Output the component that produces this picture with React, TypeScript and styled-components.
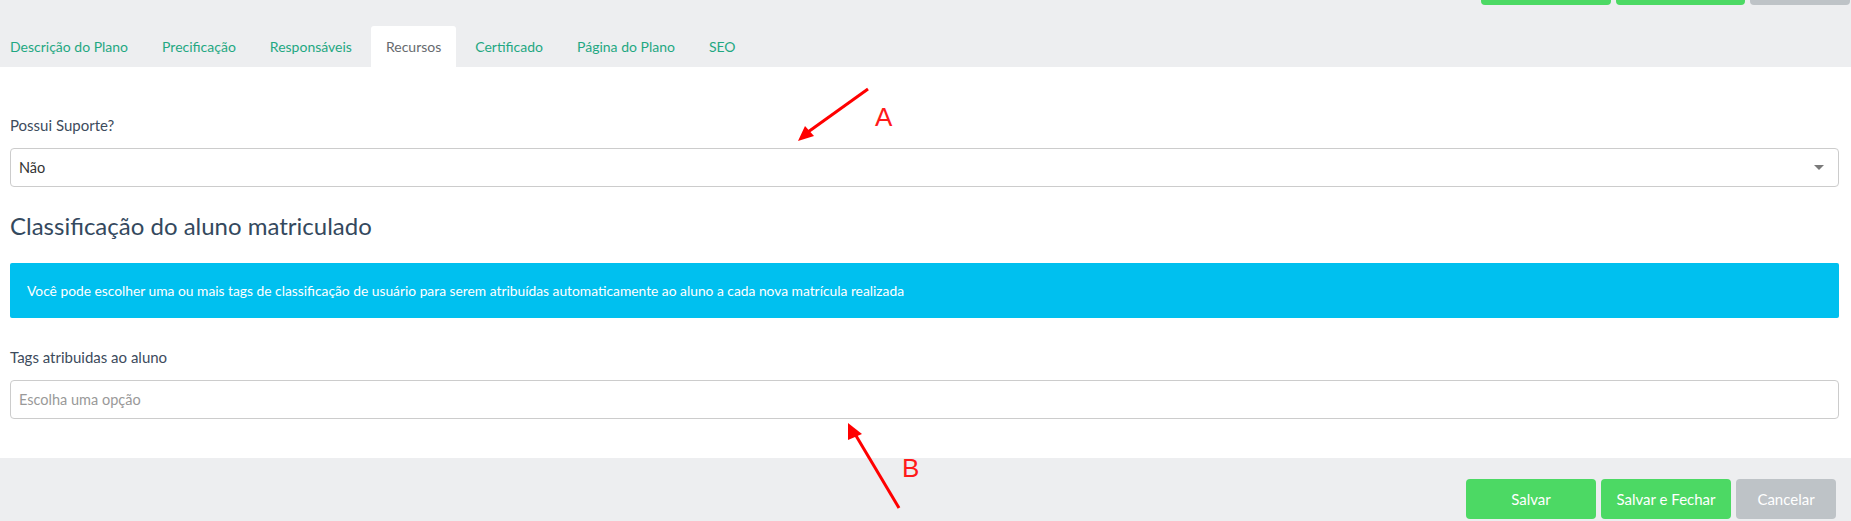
import styled, { createGlobalStyle } from "styled-components";

const GlobalStyle = createGlobalStyle`
  * { box-sizing: border-box; }
  html, body {
    margin: 0;
    padding: 0;
    background: #ffffff;
    font-family: Lato, "Open Sans", "Liberation Sans", sans-serif;
    color: #34495e;
  }
`;

const tabs = [
  "Descrição do Plano",
  "Precificação",
  "Responsáveis",
  "Recursos",
  "Certificado",
  "Página do Plano",
  "SEO",
];

export default function App() {
  return (
    <Page>
      <GlobalStyle />
      <Header>
        <TopActions>
          <TopButton $variant="primary" $width={130} />
          <TopButton $variant="primary" $width={129} />
          <TopButton $variant="muted" $width={100} />
        </TopActions>
        <TabList>
          {tabs.map((t) => (
            <Tab key={t} $active={t === "Recursos"}>
              {t}
            </Tab>
          ))}
        </TabList>
      </Header>

      <Content>
        <Field>
          <Label>Possui Suporte?</Label>
          <SelectBox>
            <span>Não</span>
            <Caret />
          </SelectBox>
        </Field>

        <SectionTitle>Classificação do aluno matriculado</SectionTitle>

        <InfoBox>
          Você pode escolher uma ou mais tags de classificação de usuário para
          serem atribuídas automaticamente ao aluno a cada nova matrícula
          realizada
        </InfoBox>

        <Field>
          <Label>Tags atribuidas ao aluno</Label>
          <SelectBox>
            <Placeholder>Escolha uma opção</Placeholder>
          </SelectBox>
        </Field>
      </Content>

      <Footer>
        <FooterButton $variant="primary" $width={130}>
          Salvar
        </FooterButton>
        <FooterButton $variant="primary" $width={130}>
          Salvar e Fechar
        </FooterButton>
        <FooterButton $variant="muted" $width={100}>
          Cancelar
        </FooterButton>
      </Footer>

      <Annotation style={{ left: 796, top: 86 }}>
        <svg width="80" height="60" viewBox="0 0 80 60">
          <line x1="72" y1="3" x2="12" y2="46" stroke="#ff0000" strokeWidth="3" />
          <polygon points="2,55 9,40 18,50" fill="#ff0000" />
        </svg>
      </Annotation>
      <AnnotationLetter style={{ left: 875, top: 104 }}>A</AnnotationLetter>

      <Annotation style={{ left: 840, top: 420 }}>
        <svg width="70" height="95" viewBox="0 0 70 95">
          <line x1="59" y1="88" x2="15" y2="14" stroke="#ff0000" strokeWidth="3" />
          <polygon points="8,3 8,20 22,14" fill="#ff0000" />
        </svg>
      </Annotation>
      <AnnotationLetter style={{ left: 902, top: 455 }}>B</AnnotationLetter>
    </Page>
  );
}

const colors = {
  primary: "#4cd964",
  muted: "#bec3c7",
};

const Page = styled.div`
  position: relative;
  width: 1851px;
  height: 521px;
  overflow: hidden;
  background: #ffffff;
`;

const Header = styled.div`
  background: #edeef0;
  height: 67px;
  display: flex;
  flex-direction: column;
`;

const TopActions = styled.div`
  height: 5px;
  display: flex;
  justify-content: flex-end;
  align-items: flex-end;
  gap: 5px;
  padding-right: 1px;
  overflow: hidden;
`;

const TopButton = styled.div<{ $variant: "primary" | "muted"; $width: number }>`
  flex: none;
  width: ${(p) => p.$width}px;
  height: 40px;
  border-radius: 4px;
  background: ${(p) => colors[p.$variant]};
`;

const TabList = styled.div`
  display: flex;
  align-items: stretch;
  gap: 4px;
  margin-top: 21px;
  margin-left: -5px;
  height: 41px;
`;

const Tab = styled.div<{ $active?: boolean }>`
  display: flex;
  align-items: center;
  padding: 0 15px 1px;
  font-size: 14px;
  color: ${(p) => (p.$active ? "#666a6e" : "#1fa882")};
  background: ${(p) => (p.$active ? "#ffffff" : "transparent")};
  border-radius: 3px 3px 0 0;
  white-space: nowrap;
`;

const Content = styled.div`
  padding: 48px 12px 0 10px;
  height: 391px;
`;

const Field = styled.div`
  display: flex;
  flex-direction: column;
`;

const Label = styled.div`
  font-size: 15px;
  color: #3d4b5c;
  line-height: 20px;
  margin-bottom: 13px;
`;

const SelectBox = styled.div`
  position: relative;
  display: flex;
  align-items: center;
  height: 39px;
  padding: 0 8px;
  border: 1px solid #cccccc;
  border-radius: 4px;
  font-size: 14.5px;
  color: #333333;
  background: #ffffff;
`;

const Caret = styled.span`
  margin-left: auto;
  margin-right: 6px;
  width: 0;
  height: 0;
  border-style: solid;
  border-width: 5px 5px 0 5px;
  border-color: #7a7a7a transparent transparent transparent;
`;

const Placeholder = styled.span`
  color: #999999;
`;

const SectionTitle = styled.h3`
  margin: 18px 0 0;
  font-size: 24px;
  font-weight: 400;
  line-height: 42px;
  color: #34495e;
`;

const InfoBox = styled.div`
  margin: 16px 0 29px;
  height: 55px;
  display: flex;
  align-items: center;
  padding: 0 17px;
  background: #00c0ef;
  color: #ffffff;
  font-size: 13.8px;
  border-radius: 2px;
`;

const Footer = styled.div`
  background: #edeef0;
  height: 63px;
  display: flex;
  justify-content: flex-end;
  align-items: flex-start;
  gap: 5px;
  padding: 21px 15px 0 0;
`;

const FooterButton = styled.button<{ $variant: "primary" | "muted"; $width: number }>`
  width: ${(p) => p.$width}px;
  height: 40px;
  border: none;
  border-radius: 4px;
  background: ${(p) => colors[p.$variant]};
  color: #ffffff;
  font-family: Lato, "Liberation Sans", sans-serif;
  font-size: 15px;
  cursor: pointer;
`;

const Annotation = styled.div`
  position: absolute;
  pointer-events: none;
  line-height: 0;
`;

const AnnotationLetter = styled.div`
  position: absolute;
  font-family: "Liberation Sans", Arial, sans-serif;
  font-size: 26px;
  color: #ff1a1a;
  line-height: 1;
`;
